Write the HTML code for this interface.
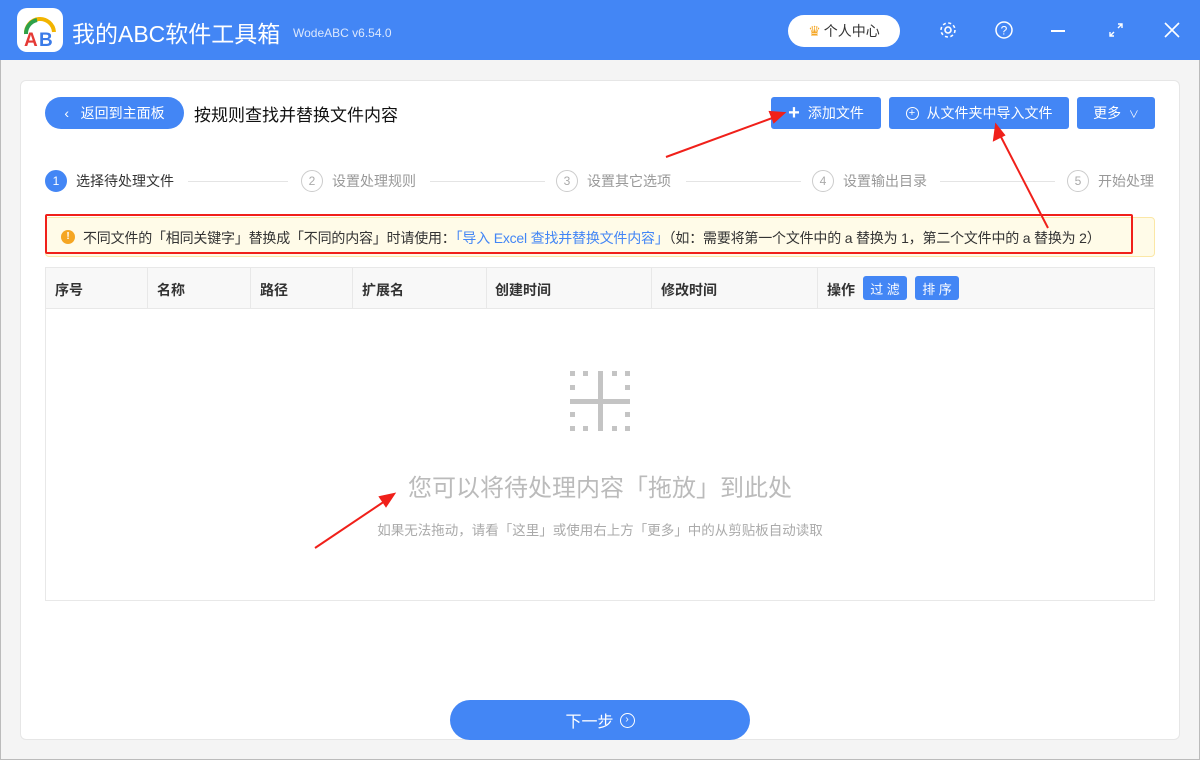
<!DOCTYPE html>
<html><head><meta charset="utf-8"><style>
*{box-sizing:border-box;margin:0;padding:0}
body{width:1200px;height:760px;overflow:hidden;font-family:"Liberation Sans","Noto Sans CJK SC",sans-serif;background:#f4f4f4;position:relative;box-shadow:inset 0 0 0 1px #bbb}
.abs{position:absolute}
.top{left:0;top:0;width:1200px;height:60px;background:#4386f5}
.panel{left:20px;top:80px;width:1160px;height:660px;background:#fff;border:1px solid #e6e6e6;border-radius:6px}
.btn{background:#4386f5;color:#fff;font-size:14px;display:flex;align-items:center;justify-content:center;border-radius:3px}
.step{font-size:14px;color:#999;display:flex;align-items:center}
.circ{width:22px;height:22px;border:1px solid #ccc;border-radius:50%;font-size:12px;display:flex;align-items:center;justify-content:center;color:#aaa;margin-right:9px}
.line{height:1px;background:#e4e4e4}
.hd{font-size:14px;font-weight:bold;color:#333}
</style></head><body>
<div class="abs top"></div>
<div class="abs" style="left:17px;top:8px;width:46px;height:44px;background:#fff;border-radius:10px">
<svg width="46" height="44"><path d="M9 26 A14 14 0 0 1 37 24" fill="none" stroke="#f2b400" stroke-width="4"/><path d="M9 26 A14 14 0 0 1 20 12" fill="none" stroke="#2ea14a" stroke-width="4"/><text x="7" y="38" font-size="19" font-weight="bold" fill="#e53935" font-family="Liberation Sans">A</text><text x="22" y="38" font-size="19" font-weight="bold" fill="#3b7be8" font-family="Liberation Sans">B</text></svg></div>
<div class="abs" style="left:72px;top:15px;font-size:23px;color:#fff;white-space:nowrap">我的ABC软件工具箱</div>
<div class="abs" style="left:293px;top:26px;font-size:12px;color:#dce8fd">WodeABC v6.54.0</div>
<div class="abs" style="left:788px;top:15px;width:112px;height:32px;background:#fff;border-radius:16px;font-size:14px;color:#333;display:flex;align-items:center;justify-content:center"><span style="color:#f5a623;margin-right:3px">♛</span>个人中心</div>
<svg class="abs" style="left:938px;top:20px" width="20" height="20"><circle cx="10" cy="10" r="3" fill="none" stroke="#fff" stroke-width="1.6"/><circle cx="10" cy="10" r="7" fill="none" stroke="#fff" stroke-width="1.6" stroke-dasharray="3 2.5"/></svg>
<svg class="abs" style="left:994px;top:20px" width="20" height="20"><circle cx="10" cy="10" r="8" fill="none" stroke="#fff" stroke-width="1.5"/><text x="10" y="14.5" font-size="12" fill="#fff" text-anchor="middle" font-family="Liberation Sans">?</text></svg>
<div class="abs" style="left:1051px;top:30px;width:14px;height:2px;background:#fff"></div>
<svg class="abs" style="left:1108px;top:22px" width="16" height="16"><path d="M2 14L6 10M10 6L14 2M10 2H14V6M2 10V14H6" fill="none" stroke="#fff" stroke-width="1.4"/></svg>
<svg class="abs" style="left:1164px;top:22px" width="16" height="16"><path d="M1 1L15 15M15 1L1 15" stroke="#fff" stroke-width="1.6"/></svg>
<div class="abs panel"></div>
<div class="abs btn" style="left:45px;top:97px;width:139px;height:32px;border-radius:16px">‹&nbsp;&nbsp; 返回到主面板</div>
<div class="abs" style="left:194px;top:101px;font-size:17px;color:#111">按规则查找并替换文件内容</div>
<div class="abs btn" style="left:771px;top:97px;width:110px;height:32px"><b style="font-size:20px;margin-right:8px">+</b>添加文件</div>
<div class="abs btn" style="left:889px;top:97px;width:180px;height:32px"><span style="display:inline-block;width:13px;height:13px;border:1.5px solid #fff;border-radius:50%;margin-right:8px;font-size:11px;line-height:10px;text-align:center">+</span>从文件夹中导入文件</div>
<div class="abs btn" style="left:1077px;top:97px;width:78px;height:32px">更多 &nbsp;<span style="font-size:10px">∨</span></div>
<div class="abs step" style="left:45px;top:170px;color:#333"><div class="circ" style="background:#4386f5;border-color:#4386f5;color:#fff">1</div>选择待处理文件</div>
<div class="abs line" style="left:188px;top:181px;width:100px"></div>
<div class="abs step" style="left:301px;top:170px"><div class="circ">2</div>设置处理规则</div>
<div class="abs line" style="left:430px;top:181px;width:115px"></div>
<div class="abs step" style="left:556px;top:170px"><div class="circ">3</div>设置其它选项</div>
<div class="abs line" style="left:686px;top:181px;width:115px"></div>
<div class="abs step" style="left:812px;top:170px"><div class="circ">4</div>设置输出目录</div>
<div class="abs line" style="left:940px;top:181px;width:115px"></div>
<div class="abs step" style="left:1067px;top:170px"><div class="circ">5</div>开始处理</div>
<div class="abs" style="left:45px;top:217px;width:1110px;height:40px;background:#fffbe8;border:1px solid #fbe7a6;border-radius:4px"></div>
<div class="abs" style="left:45px;top:214px;width:1088px;height:40px;border:2px solid #f0201a;border-radius:2px"></div>
<div class="abs" style="left:61px;top:230px;width:14px;height:14px;border-radius:50%;background:#f5a623;color:#fff;font-size:10px;text-align:center;line-height:14px;font-weight:bold">!</div>
<div class="abs" style="left:83px;top:228px;font-size:14px;letter-spacing:-0.2px;color:#333;white-space:nowrap">不同文件的「相同关键字」替换成「不同的内容」时请使用：<span style="color:#4386f5">「导入 Excel 查找并替换文件内容」</span>（如：需要将第一个文件中的 a 替换为 1，第二个文件中的 a 替换为 2）</div>
<div class="abs" style="left:45px;top:267px;width:1110px;height:334px;border:1px solid #e8e8e8"></div>
<div class="abs" style="left:46px;top:268px;width:1108px;height:41px;background:#f8f8f8;border-bottom:1px solid #e8e8e8"></div>
<div class="abs" style="left:147px;top:268px;width:1px;height:41px;background:#e8e8e8"></div>
<div class="abs" style="left:250px;top:268px;width:1px;height:41px;background:#e8e8e8"></div>
<div class="abs" style="left:352px;top:268px;width:1px;height:41px;background:#e8e8e8"></div>
<div class="abs" style="left:486px;top:268px;width:1px;height:41px;background:#e8e8e8"></div>
<div class="abs" style="left:651px;top:268px;width:1px;height:41px;background:#e8e8e8"></div>
<div class="abs" style="left:817px;top:268px;width:1px;height:41px;background:#e8e8e8"></div>
<div class="abs hd" style="left:55px;top:280px">序号</div>
<div class="abs hd" style="left:157px;top:280px">名称</div>
<div class="abs hd" style="left:260px;top:280px">路径</div>
<div class="abs hd" style="left:362px;top:280px">扩展名</div>
<div class="abs hd" style="left:495px;top:280px">创建时间</div>
<div class="abs hd" style="left:661px;top:280px">修改时间</div>
<div class="abs hd" style="left:827px;top:280px">操作</div>
<div class="abs btn" style="left:863px;top:276px;width:44px;height:24px;font-size:13px">过 滤</div>
<div class="abs btn" style="left:915px;top:276px;width:44px;height:24px;font-size:13px">排 序</div>
<svg class="abs" style="left:570px;top:371px" width="60" height="60" fill="#c4c4c4"><rect x="28" y="0" width="5" height="60"/><rect x="0" y="28" width="60" height="5"/><rect x="0" y="0" width="5" height="5"/><rect x="13" y="0" width="5" height="5"/><rect x="42" y="0" width="5" height="5"/><rect x="55" y="0" width="5" height="5"/><rect x="0" y="14" width="5" height="5"/><rect x="55" y="14" width="5" height="5"/><rect x="0" y="41" width="5" height="5"/><rect x="55" y="41" width="5" height="5"/><rect x="0" y="55" width="5" height="5"/><rect x="13" y="55" width="5" height="5"/><rect x="42" y="55" width="5" height="5"/><rect x="55" y="55" width="5" height="5"/></svg>
<div class="abs" style="left:0;width:1200px;top:468px;text-align:center;font-size:24px;color:#bbb">您可以将待处理内容「拖放」到此处</div>
<div class="abs" style="left:0;width:1200px;top:519px;text-align:center;font-size:13.5px;color:#aaa">如果无法拖动，请看「这里」或使用右上方「更多」中的从剪贴板自动读取</div>
<div class="abs btn" style="left:450px;top:700px;width:300px;height:40px;border-radius:20px;font-size:16px">下一步 <span style="display:inline-block;width:15px;height:15px;border:1.5px solid #fff;border-radius:50%;margin-left:6px;font-size:10px;line-height:12px;text-align:center">›</span></div>
<svg class="abs" style="left:0;top:0" width="1200" height="760"><g stroke="#f0201a" stroke-width="2" fill="#f0201a"><line x1="666" y1="157" x2="775" y2="117"/><path d="M784 113L770 112L774 122Z"/><line x1="1048" y1="228" x2="1000" y2="135"/><path d="M996 125L994 140L1004 135Z"/><line x1="315" y1="548" x2="385" y2="501"/><path d="M394 494L380 497L386 506Z"/></g></svg>
</body></html>
